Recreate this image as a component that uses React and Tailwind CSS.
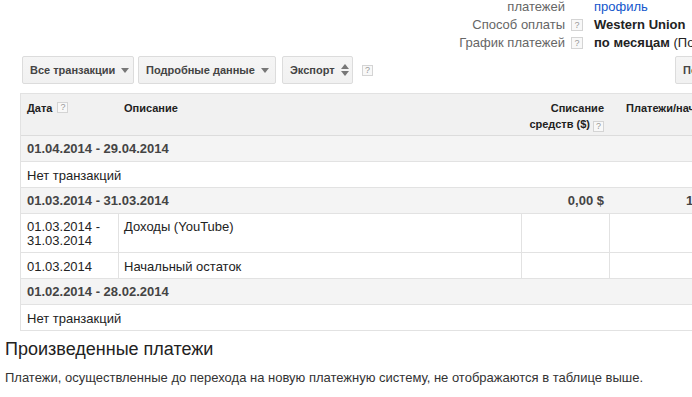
import React from "react";

function Q({ size = "w-[11px] h-[11px]" }) {
  return (
    <span
      className={`inline-flex ${size} items-center justify-center border border-[#d4d4d4] bg-[#f8f8f8] text-[9px] leading-none text-[#999] font-normal align-middle`}
    >
      ?
    </span>
  );
}

function Caret() {
  return (
    <svg width="8" height="5" viewBox="0 0 8 5" className="ml-[6px] shrink-0">
      <path d="M0 0 L8 0 L4 5 Z" fill="#777" />
    </svg>
  );
}

function UpDown() {
  return (
    <svg width="8" height="12" viewBox="0 0 8 12" className="ml-[6px] shrink-0">
      <path d="M0 5 L8 5 L4 0 Z" fill="#777" />
      <path d="M0 7 L8 7 L4 12 Z" fill="#777" />
    </svg>
  );
}

function Btn({ children, className = "" }) {
  return (
    <div
      className={`flex h-[28px] shrink-0 items-center rounded-[2px] border border-[#dcdcdc] bg-gradient-to-b from-[#f5f5f5] to-[#f1f1f1] px-[7px] text-[11px] font-bold text-[#444] whitespace-nowrap ${className}`}
    >
      {children}
    </div>
  );
}

const GRID = "grid grid-cols-[98px_403px_88px_200px]";

function GroupRow({ label, amount, pay }) {
  return (
    <div className={`${GRID} h-[26px] border-b border-[#e2e2e2] bg-[#f4f4f4] text-[13px] font-bold text-[#444]`}>
      <div className="col-span-2 flex items-center pl-[6px]">{label}</div>
      <div className="flex items-center justify-end pr-[6px]">{amount}</div>
      <div className="flex items-center pl-[76px] whitespace-nowrap">{pay}</div>
    </div>
  );
}

function EmptyRow() {
  return (
    <div className="flex h-[26px] items-center border-b border-[#e2e2e2] pl-[6px] pt-[2px] text-[13px] text-[#222]">
      Нет транзакций
    </div>
  );
}

export default function App() {
  return (
    <div className="h-[397px] w-[692px] overflow-hidden bg-white font-['Liberation_Sans',Arial,sans-serif] text-[13px] text-[#222]">
      <div className="w-[820px] pl-[5px]">
        {/* top info */}
        <div className="-mt-[2px] grid grid-cols-[560px_29px_auto] leading-[18px]">
          <div className="text-right text-[#666]">платежей</div>
          <div />
          <div className="text-[#1155cc]">профиль</div>

          <div className="text-right text-[#666]">Способ оплаты</div>
          <div className="flex items-center pl-[6px]">
            <Q size="w-[12px] h-[12px]" />
          </div>
          <div className="font-bold">Western Union</div>

          <div className="text-right text-[#666]">График платежей</div>
          <div className="flex items-center pl-[6px]">
            <Q size="w-[12px] h-[12px]" />
          </div>
          <div className="whitespace-nowrap">
            <span className="font-bold">по месяцам</span> (Подробнее)
          </div>
        </div>

        {/* toolbar */}
        <div className="ml-[17px] mt-[4px] flex items-center">
          <Btn className="w-[112px]">
            Все транзакции
            <Caret />
          </Btn>
          <Btn className="ml-[4px] w-[138px]">
            Подробные данные
            <Caret />
          </Btn>
          <Btn className="ml-[6px] w-[71px]">
            Экспорт
            <UpDown />
          </Btn>
          <span className="ml-[9px] flex">
            <Q />
          </span>
          <Btn className="ml-[302px]">Показать строки</Btn>
        </div>

        {/* table */}
        <div className="ml-[15px] mt-[9px] w-[800px] border-l border-t border-[#e2e2e2]">
          <div className={`${GRID} h-[42px] border-b border-[#dcdcdc] bg-[#f1f1f1] pt-[6px] text-[11px] font-bold leading-[16px] text-[#222]`}>
            <div className="flex items-start pl-[6px]">
              <span>Дата</span>
              <span className="ml-[5px] mt-[2px] flex">
                <Q />
              </span>
            </div>
            <div className="pl-[5px]">Описание</div>
            <div className="pr-[6px] text-right">
              Списание
              <br />
              средств ($){" "}
              <span className="inline-flex align-[-1px]">
                <Q />
              </span>
            </div>
            <div className="pl-[16px] whitespace-nowrap">Платежи/начисления ($)</div>
          </div>

          <GroupRow label="01.04.2014 - 29.04.2014" />
          <EmptyRow />
          <GroupRow label="01.03.2014 - 31.03.2014" amount="0,00 $" pay="1 000,00 $" />

          <div className={`${GRID} h-[39px] border-b border-[#e2e2e2] text-[13px] leading-[14px] text-[#222]`}>
            <div className="border-r border-[#e2e2e2] pl-[6px] pt-[6px]">
              01.03.2014 -
              <br />
              31.03.2014
            </div>
            <div className="border-r border-[#e2e2e2] pl-[5px] pt-[6px]">Доходы (YouTube)</div>
            <div className="border-r border-[#e2e2e2]" />
            <div />
          </div>

          <div className={`${GRID} h-[26px] border-b border-[#e2e2e2] text-[13px] text-[#222]`}>
            <div className="flex items-center border-r border-[#e2e2e2] pl-[6px] pt-[2px]">01.03.2014</div>
            <div className="flex items-center border-r border-[#e2e2e2] pl-[5px] pt-[2px]">Начальный остаток</div>
            <div className="border-r border-[#e2e2e2]" />
            <div />
          </div>

          <GroupRow label="01.02.2014 - 28.02.2014" />
          <EmptyRow />
        </div>

        {/* section */}
        <div className="mt-[7px] text-[18px] leading-[22px] text-[#222]">Произведенные платежи</div>
        <div className="mt-[10px] text-[13px] leading-[16px] text-[#333]">
          Платежи, осуществленные до перехода на новую платежную систему, не отображаются в таблице выше.
        </div>
      </div>
    </div>
  );
}
